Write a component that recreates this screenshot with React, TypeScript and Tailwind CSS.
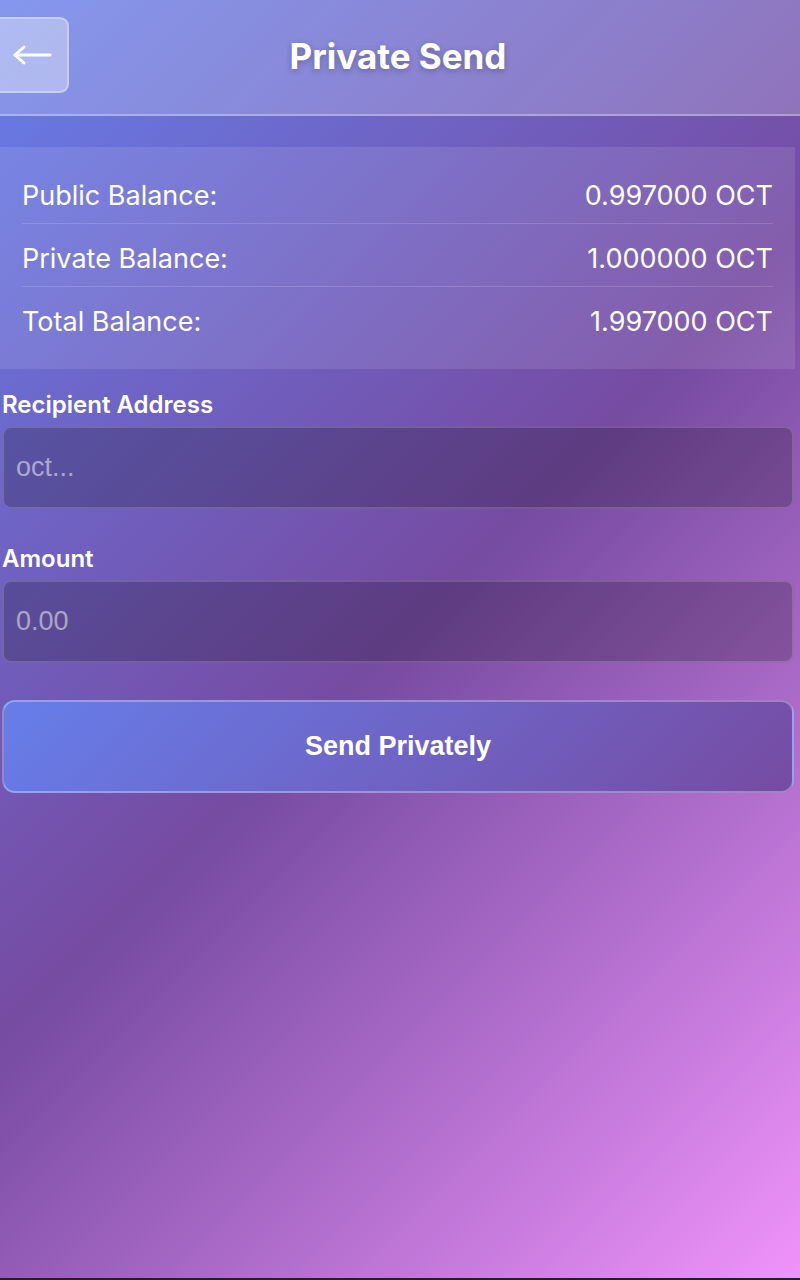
import React from 'react'

const balances = [
  { label: 'Public Balance:', value: '0.997000 OCT' },
  { label: 'Private Balance:', value: '1.000000 OCT' },
  { label: 'Total Balance:', value: '1.997000 OCT' },
]

const BackArrow: React.FC = () => (
  <svg width="40" height="24" viewBox="0 0 40 24" fill="none" stroke="white" strokeWidth="3" strokeLinecap="round" strokeLinejoin="round">
    <path d="M3 12h35" />
    <path d="M12 4L3 12l9 8" />
  </svg>
)

const App: React.FC = () => {
  return (
    <div className="h-[1280px] w-[800px] bg-[#202124] overflow-hidden">
      <div className="h-[1278px] w-[800px] bg-[linear-gradient(135deg,#667eea_0%,#764ba2_50%,#f093fb_100%)] font-['Inter',sans-serif] text-white">
        <header className="h-[116px] flex items-center bg-white/20 border-b-2 border-white/30">
          <button className="-ml-[8px] w-[77px] h-[76px] mt-[-4px] flex items-center justify-center pl-[2px] rounded-[9px] bg-white/35 border-2 border-white/30">
            <BackArrow />
          </button>
          <h1 className="flex-1 text-center text-[35px] font-bold -mt-[2px] pr-[4px] [text-shadow:0_2px_6px_rgba(0,0,0,0.25)]">
            Private Send
          </h1>
          <div className="w-[69px]" />
        </header>

        <main className="pt-[31px] pl-[2px] w-[796px]">
          <section className="-ml-[2px] w-[795px] bg-white/10 px-[22px] pt-[21px] pb-[20px]">
            {balances.map((b, i) => (
              <div
                key={b.label}
                className={
                  i < balances.length - 1
                    ? 'flex justify-between items-center py-2 leading-[39px] text-[27px] border-b border-white/15 mb-[7px]'
                    : 'flex justify-between items-center py-2 leading-[39px] text-[27px]'
                }
              >
                <span>{b.label}</span>
                <span>{b.value}</span>
              </div>
            ))}
          </section>

          <div className="mt-[23px]">
            <label className="block text-[24px] font-semibold leading-[26px] mb-[8px]">Recipient Address</label>
            <input
              placeholder="oct..."
              className="w-[792px] h-[83px] px-[12px] rounded-[9px] bg-black/20 border-2 border-white/15 text-[27px] font-['Liberation_Sans',Arial,sans-serif] text-white placeholder:text-white/50 outline-none"
            />
          </div>

          <div className="mt-[37px]">
            <label className="block text-[24px] font-semibold leading-[26px] mb-[8px]">Amount</label>
            <input
              placeholder="0.00"
              className="w-[792px] h-[83px] px-[12px] rounded-[9px] bg-black/20 border-2 border-white/15 text-[27px] font-['Liberation_Sans',Arial,sans-serif] text-white placeholder:text-white/50 outline-none"
            />
          </div>

          <button className="mt-[37px] w-[792px] h-[93px] rounded-[13px] bg-[linear-gradient(135deg,#667eea,#764ba2)] border-2 border-white/30 text-[27px] font-bold font-['Liberation_Sans',Arial,sans-serif]">
            Send Privately
          </button>
        </main>
      </div>
    </div>
  )
}

export default App
